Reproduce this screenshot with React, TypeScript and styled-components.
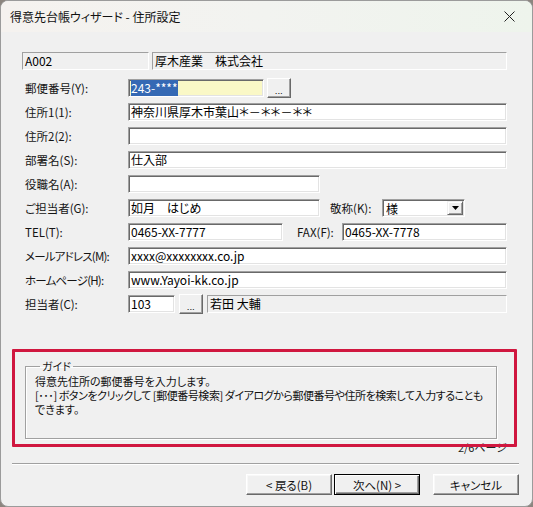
import styled, { createGlobalStyle } from "styled-components";

const GlobalStyle = createGlobalStyle`
  html, body {
    margin: 0;
    padding: 0;
    background: #8c857f;
  }
  body {
    font-family: "Noto Sans CJK JP", "Noto Sans", sans-serif;
    color: #000;
  }
`;

const Window = styled.div`
  width: 533px;
  height: 507px;
  box-sizing: border-box;
  border: 1px solid #9b9b9b;
  border-radius: 8px;
  background: #f0f0f0;
  overflow: hidden;
  display: flex;
  flex-direction: column;
  font-feature-settings: "palt" 1;
`;

const TitleBar = styled.div`
  height: 31px;
  flex: none;
  display: flex;
  align-items: center;
  padding-left: 9px;
  background: linear-gradient(90deg, #f5f2ef 0%, #f2f3f0 50%, #eef4ec 100%);
`;

const Title = styled.span`
  flex: 1;
  font-size: 12px;
  color: #111;
`;

const CloseButton = styled.div`
  width: 46px;
  height: 31px;
  display: flex;
  align-items: center;
  justify-content: center;
`;

const Body = styled.div`
  padding: 20px 25px 0 21px;
  display: flex;
  flex-direction: column;
`;

const HeaderRow = styled.div`
  display: flex;
  gap: 3px;
  height: 18px;
  margin-bottom: 6px;
`;

const ReadOnlyBox = styled.div<{ $width?: number }>`
  box-sizing: border-box;
  height: 18px;
  ${(p) => (p.$width ? `width: ${p.$width}px;` : "flex: 1;")}
  border: 1px solid;
  border-color: #a0a0a0 #ffffff #ffffff #a0a0a0;
  background: #f0f0f0;
  font-size: 12px;
  line-height: 16px;
  padding-left: 2px;
  white-space: nowrap;
  overflow: hidden;
`;

const FormRow = styled.div`
  display: flex;
  align-items: center;
  height: 24px;
`;

const Label = styled.div<{ $width?: number; $indent?: number; $tight?: boolean }>`
  flex: none;
  box-sizing: border-box;
  width: ${(p) => p.$width ?? 106}px;
  margin-left: ${(p) => p.$indent ?? 0}px;
  padding-left: ${(p) => (p.$indent === undefined ? 3 : 0)}px;
  font-size: 11.5px;
  letter-spacing: ${(p) => (p.$tight ? "-0.8px" : "0")};
  color: #141414;
  white-space: nowrap;
`;

const Input = styled.div<{ $width?: number; $bg?: string }>`
  box-sizing: border-box;
  height: 18px;
  ${(p) => (p.$width ? `width: ${p.$width}px; flex: none;` : "flex: 1;")}
  border: 1px solid;
  border-color: #a0a0a0 #ffffff #ffffff #a0a0a0;
  box-shadow: inset 1px 1px 0 #696969, inset -1px -1px 0 #e3e3e3;
  background: ${(p) => p.$bg ?? "#ffffff"};
  font-size: 12px;
  line-height: 16px;
  padding-left: 2px;
  white-space: nowrap;
  overflow: hidden;
`;

const Selection = styled.span`
  background: #3569b4;
  color: #fff;
`;

const DotButton = styled.div<{ $gap: number }>`
  box-sizing: border-box;
  flex: none;
  width: 24px;
  height: 20px;
  margin: 0 ${(p) => p.$gap}px 0 ${(p) => p.$gap}px;
  border: 1px solid;
  border-color: #ffffff #696969 #696969 #ffffff;
  box-shadow: inset -1px -1px 0 #a0a0a0;
  background: #f0f0f0;
  display: flex;
  align-items: flex-end;
  justify-content: center;
  font-size: 8px;
  line-height: 12px;
  letter-spacing: 0.5px;
`;

const Select = styled.div`
  box-sizing: border-box;
  flex: none;
  width: 83px;
  height: 18px;
  border: 1px solid;
  border-color: #a0a0a0 #ffffff #ffffff #a0a0a0;
  box-shadow: inset 1px 1px 0 #696969, inset -1px -1px 0 #e3e3e3;
  background: #fff;
  display: flex;
  align-items: center;
  padding: 1px 1px 1px 3px;
  font-size: 12px;
`;

const SelectValue = styled.span`
  flex: 1;
`;

const SelectArrow = styled.div`
  box-sizing: border-box;
  width: 16px;
  height: 14px;
  border: 1px solid;
  border-color: #f0f0f0 #696969 #696969 #f0f0f0;
  box-shadow: inset 1px 1px 0 #fff, inset -1px -1px 0 #a0a0a0;
  background: #f0f0f0;
  display: flex;
  align-items: center;
  justify-content: center;
`;

const GuideArea = styled.div`
  position: relative;
  margin: 43px 0 0 3px;
  width: 484px;
`;

const GuideBox = styled.fieldset`
  box-sizing: border-box;
  width: 472px;
  height: 80px;
  margin: 0;
  padding: 1px 9px 0 9px;
  border: 1px solid #a0a0a0;
  box-shadow: 1px 1px 0 #ffffff, inset 1px 1px 0 #ffffff;
`;

const GuideLegend = styled.legend`
  font-size: 11px;
  line-height: 14px;
  padding: 0 2px;
  margin-left: 5px;
  color: #1a1a1a;
`;

const GuideLine = styled.div<{ $tight?: boolean }>`
  font-size: 11px;
  line-height: 14px;
  height: 14px;
  letter-spacing: ${(p) => (p.$tight ? "-0.45px" : "0")};
  white-space: nowrap;
  color: #111;
`;

const PageInfo = styled.div`
  font-size: 11px;
  line-height: 16px;
  text-align: right;
  color: #222;
  padding-right: 2px;
`;

const Highlight = styled.div`
  position: absolute;
  left: -13px;
  top: -10px;
  width: 505px;
  height: 98px;
  box-sizing: border-box;
  border: 3px solid #d0173f;
  border-radius: 1px;
  pointer-events: none;
`;

const Footer = styled.div`
  padding: 8px 13px 0 11px;
  display: flex;
  flex-direction: column;
`;

const Separator = styled.div`
  border-top: 1px solid #a0a0a0;
  border-bottom: 1px solid #ffffff;
`;

const ButtonBar = styled.div`
  margin-top: 9px;
  display: flex;
  justify-content: flex-end;
`;

const Button = styled.div<{ $default?: boolean; $gapLeft?: number }>`
  box-sizing: border-box;
  width: 86px;
  height: 21px;
  margin-left: ${(p) => p.$gapLeft ?? 0}px;
  border: 1px solid;
  border-color: ${(p) =>
    p.$default ? "#000 #000 #000 #000" : "#ffffff #696969 #696969 #ffffff"};
  box-shadow: ${(p) =>
    p.$default
      ? "inset 1px 1px 0 #fff, inset -1px -1px 0 #696969, inset -2px -2px 0 #a0a0a0"
      : "inset -1px -1px 0 #a0a0a0, inset 1px 1px 0 #f8f8f8"};
  background: #f0f0f0;
  display: flex;
  align-items: center;
  justify-content: center;
  font-size: 11.5px;
  color: #111;
`;

const App = () => (
  <>
    <GlobalStyle />
    <Window>
      <TitleBar>
        <Title>得意先台帳ウィザード - 住所設定</Title>
        <CloseButton>
          <svg width="11" height="11" viewBox="0 0 11 11">
            <path d="M0.5 0.5 L10.5 10.5 M10.5 0.5 L0.5 10.5" stroke="#222" strokeWidth="1" />
          </svg>
        </CloseButton>
      </TitleBar>
      <Body>
        <HeaderRow>
          <ReadOnlyBox $width={127}>A002</ReadOnlyBox>
          <ReadOnlyBox>厚木産業　株式会社</ReadOnlyBox>
        </HeaderRow>
        <FormRow>
          <Label>郵便番号(Y):</Label>
          <Input $width={136} $bg="#faf8c6">
            <Selection>243-****</Selection>
          </Input>
          <DotButton $gap={3}>...</DotButton>
        </FormRow>
        <FormRow>
          <Label>住所1(1):</Label>
          <Input>神奈川県厚木市葉山＊－＊＊－＊＊</Input>
        </FormRow>
        <FormRow>
          <Label>住所2(2):</Label>
          <Input />
        </FormRow>
        <FormRow>
          <Label>部署名(S):</Label>
          <Input>仕入部</Input>
        </FormRow>
        <FormRow>
          <Label>役職名(A):</Label>
          <Input $width={192} />
        </FormRow>
        <FormRow>
          <Label>ご担当者(G):</Label>
          <Input $width={192}>如月　はじめ</Input>
          <Label $indent={10} $width={52}>敬称(K):</Label>
          <Select>
            <SelectValue>様</SelectValue>
            <SelectArrow>
              <svg width="7" height="4" viewBox="0 0 7 4">
                <path d="M0 0 H7 L3.5 4 Z" fill="#000" />
              </svg>
            </SelectArrow>
          </Select>
        </FormRow>
        <FormRow>
          <Label>TEL(T):</Label>
          <Input $width={155}>0465-XX-7777</Input>
          <Label $indent={14} $width={45}>FAX(F):</Label>
          <Input>0465-XX-7778</Input>
        </FormRow>
        <FormRow>
          <Label $tight>メールアドレス(M):</Label>
          <Input>xxxx@xxxxxxxx.co.jp</Input>
        </FormRow>
        <FormRow>
          <Label $tight>ホームページ(H):</Label>
          <Input>www.Yayoi-kk.co.jp</Input>
        </FormRow>
        <FormRow>
          <Label>担当者(C):</Label>
          <Input $width={47}>103</Input>
          <DotButton $gap={4}>...</DotButton>
          <ReadOnlyBox>若田 大輔</ReadOnlyBox>
        </FormRow>
        <GuideArea>
          <GuideBox>
            <GuideLegend>ガイド</GuideLegend>
            <GuideLine>得意先住所の郵便番号を入力します。</GuideLine>
            <GuideLine $tight>
              [･･･] ボタンをクリックして [郵便番号検索] ダイアログから郵便番号や住所を検索して入力することも
            </GuideLine>
            <GuideLine>できます。</GuideLine>
          </GuideBox>
          <PageInfo>2/6ページ</PageInfo>
          <Highlight />
        </GuideArea>
      </Body>
      <Footer>
        <Separator />
        <ButtonBar>
          <Button>&lt; 戻る(B)</Button>
          <Button $default $gapLeft={2}>次へ(N) &gt;</Button>
          <Button $gapLeft={13}>キャンセル</Button>
        </ButtonBar>
      </Footer>
    </Window>
  </>
);

export default App;
